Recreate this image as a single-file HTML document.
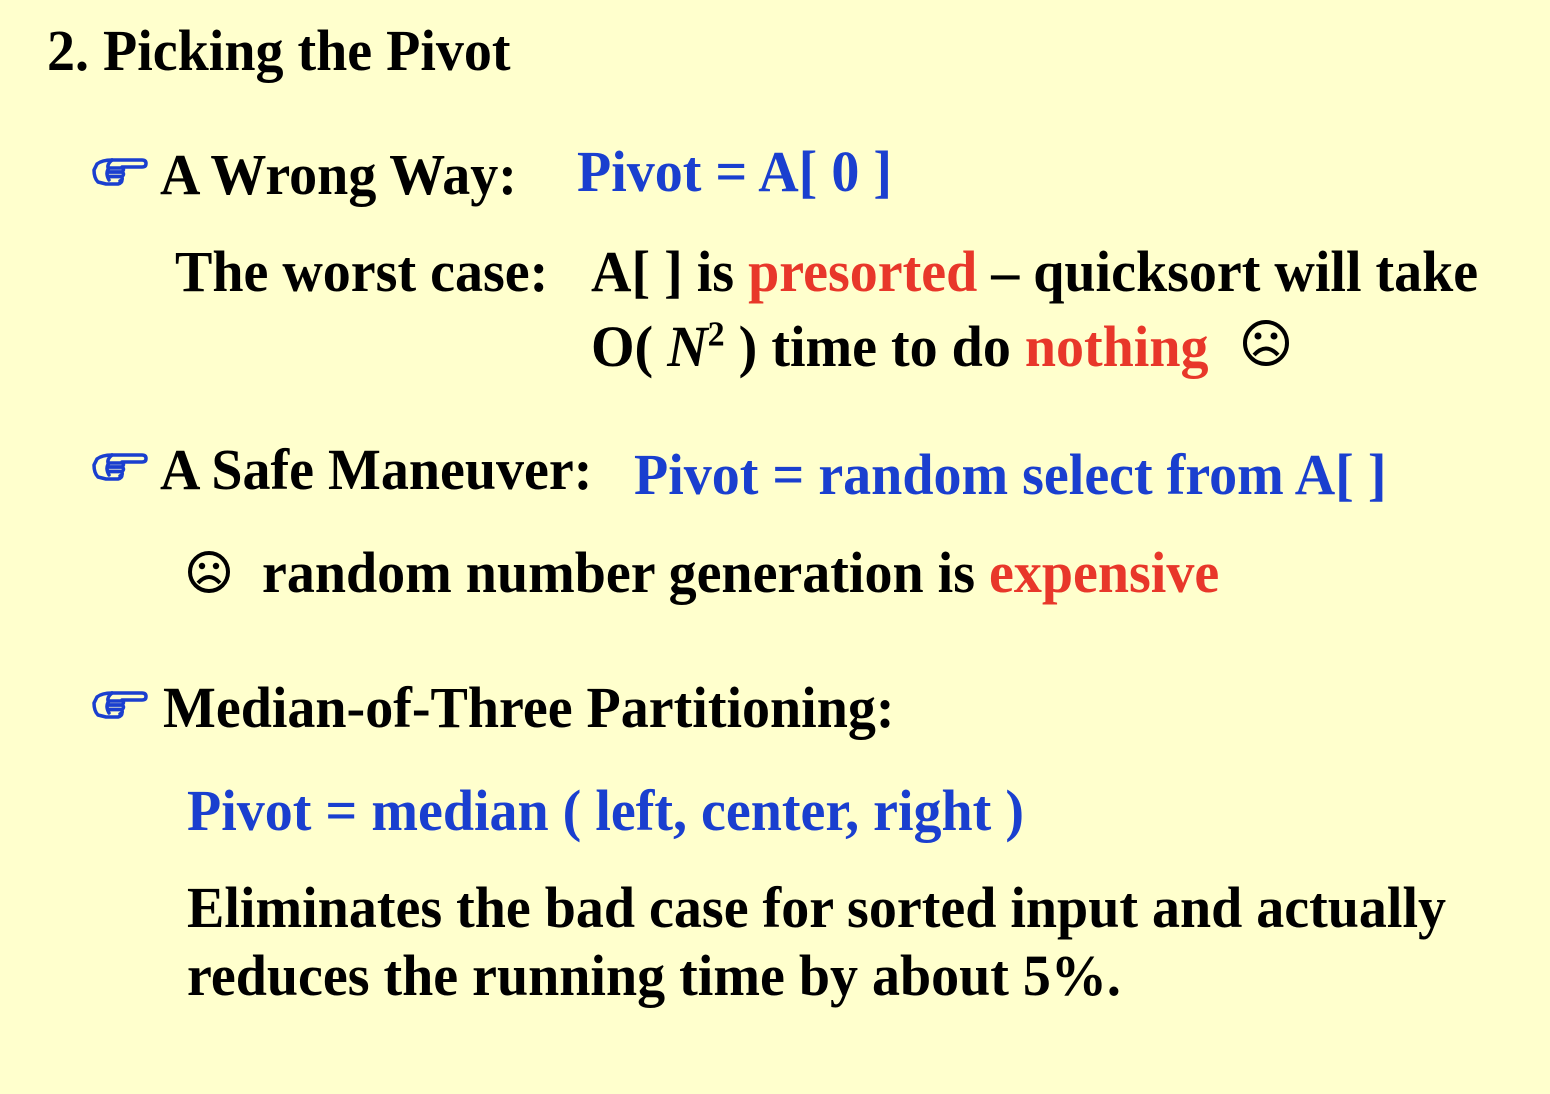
<!DOCTYPE html>
<html><head><meta charset="utf-8"><style>
body{margin:0;width:1550px;height:1094px;background:#ffffcd;overflow:hidden;position:relative;font-family:"Liberation Serif",serif;font-weight:bold;color:#000}
.t{position:absolute;white-space:nowrap;font-size:56px;line-height:56px;transform-origin:0 80%;transform:scaleY(1.04)}
.b{color:#1a3fcf}.r{color:#e8372a}
.h{position:absolute}
</style></head><body>
<svg width="0" height="0" style="position:absolute"><defs><g id="hand" fill="none" stroke="#1a3fcf" stroke-width="3.5" stroke-linecap="round" stroke-linejoin="round">
<path d="M20 4 H50 Q54 4 54 7.5 Q54 11 50 11 H30"/>
<path d="M20 4 Q10 4 5 8 L2 14 Q2 22 6 26 L14 28 H26 Q30 27 30 24"/>
<path d="M20 4 Q15 8 16 12"/>
<path d="M17 12 H30 Q33 13 30 16 H17"/>
<path d="M17 16 H30 Q33 18 30 20.5 H17"/>
<path d="M17 20.5 H29 Q32 23 28 25"/>
<path d="M17 12 Q13 17 17 24"/>
</g></defs></svg>
<div class="t" style="left:47px;top:24px">2. Picking the Pivot</div>

<svg class="h" style="left:92px;top:156px" width="58" height="32"><use href="#hand"/></svg>
<div class="t" style="left:160px;top:148px">A Wrong Way:</div>
<div class="t b" style="left:577px;top:145px">Pivot = A[ 0 ]</div>

<div class="t" style="left:175px;top:245px">The worst case:</div>
<div class="t" style="left:591px;top:245px">A[ ] is <span class="r">presorted</span> – quicksort will take</div>
<div class="t" style="left:591px;top:320px">O( <i>N</i><sup style="font-size:34px;line-height:0">2</sup> ) time to do <span class="r">nothing</span></div>
<svg style="position:absolute;left:1240px;top:318px" width="52" height="50" viewBox="0 0 52 50"><circle cx="26" cy="25" r="21" fill="none" stroke="#000" stroke-width="4"/><circle cx="18" cy="18" r="3.5"/><circle cx="34" cy="18" r="3.5"/><path d="M14 37 Q26 24 38 37" fill="none" stroke="#000" stroke-width="4"/></svg>

<svg class="h" style="left:92px;top:451px" width="58" height="32"><use href="#hand"/></svg>
<div class="t" style="left:160px;top:443px">A Safe Maneuver:</div>
<div class="t b" style="left:634px;top:448px">Pivot = random select from A[ ]</div>

<svg style="position:absolute;left:185px;top:550px" width="50" height="44" viewBox="0 0 50 44"><circle cx="24" cy="22" r="19" fill="none" stroke="#000" stroke-width="4"/><circle cx="17" cy="16" r="3.2"/><circle cx="31" cy="16" r="3.2"/><path d="M13 33 Q24 21 35 33" fill="none" stroke="#000" stroke-width="4"/></svg>
<div class="t" style="left:262px;top:546px">random number generation is <span class="r">expensive</span></div>

<svg class="h" style="left:92px;top:689px" width="58" height="32"><use href="#hand"/></svg>
<div class="t" style="left:163px;top:681px">Median-of-Three Partitioning:</div>

<div class="t b" style="left:187px;top:784px">Pivot = median ( left, center, right )</div>
<div class="t" style="left:187px;top:881px">Eliminates the bad case for sorted input and actually</div>
<div class="t" style="left:187px;top:949px">reduces the running time by about 5%.</div>
</body></html>
